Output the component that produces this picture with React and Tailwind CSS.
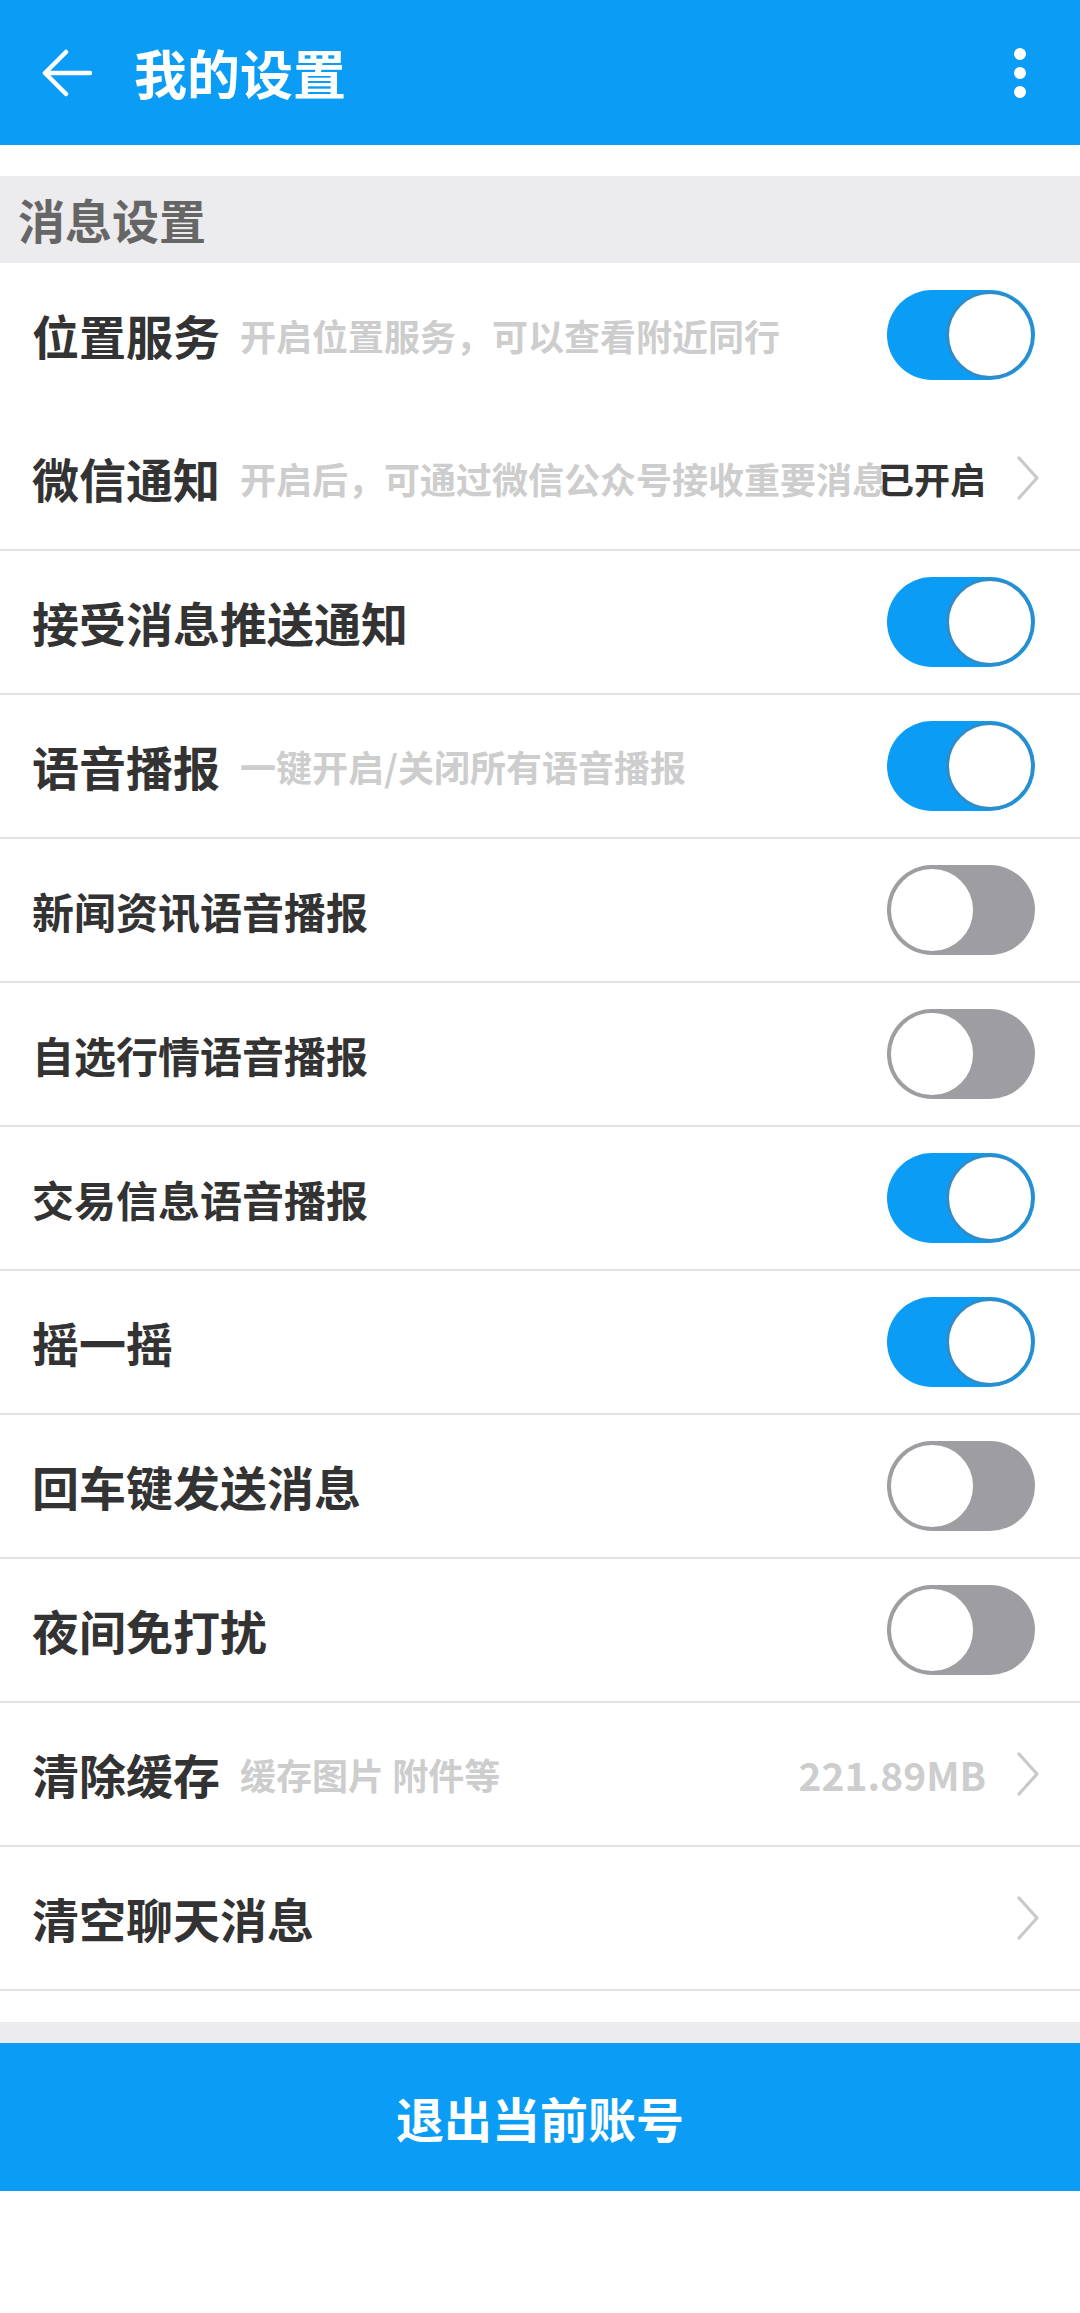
import React from "react";

const FONT = { fontFamily: '"Noto Sans CJK SC", "Noto Sans", sans-serif' };

function Toggle({ on }) {
  return on ? (
    <div className="flex h-[90px] w-[148px] items-center justify-end rounded-full bg-[#0b9df5] p-[1px]">
      <div className="h-[88px] w-[88px] rounded-full border-[3px] border-[#2f8cc9] bg-white" />
    </div>
  ) : (
    <div className="flex h-[90px] w-[148px] items-center justify-start rounded-full bg-[#9e9da1] p-[1px]">
      <div className="h-[88px] w-[88px] rounded-full border-[3px] border-[#9e9da1] bg-white" />
    </div>
  );
}

function Chevron() {
  return (
    <svg width="24" height="44" viewBox="0 0 24 44" className="shrink-0">
      <path d="M3 2 L21 22 L3 42" fill="none" stroke="#c9c9c9" strokeWidth="3.2" strokeLinecap="round" strokeLinejoin="round" />
    </svg>
  );
}

function Row({ label, small, desc, toggle, right, rightDark, chevron, border = true }) {
  return (
    <div
      className={`flex h-[144px] items-center pl-[32px] ${chevron ? "pr-[40px]" : "pr-[45px]"} ${border ? "border-b-2 border-[#e3e3e3]" : ""}`}
    >
      <span className={`shrink-0 whitespace-nowrap font-bold text-[#333333] ${small ? "text-[42px]" : "text-[47px]"}`}>
        {label}
      </span>
      <div className="min-w-0 flex-1 whitespace-nowrap">
        {desc && <span className="ml-[20px] text-[36px] font-bold text-[#cdcdcd]">{desc}</span>}
      </div>
      {right && (
        <span className={`shrink-0 whitespace-nowrap font-bold ${rightDark ? "text-[36px] text-[#333333]" : "text-[39px] text-[#cdcdcd]"}`}>
          {right}
        </span>
      )}
      {chevron && <div className="ml-[30px] flex items-center"><Chevron /></div>}
      {toggle !== undefined && <Toggle on={toggle} />}
    </div>
  );
}

export default function App() {
  return (
    <div className="min-h-[2313px] w-[1080px] bg-white" style={FONT}>
      {/* Header */}
      <div className="flex h-[145px] items-center bg-[#0b9df5] pl-[42px] pr-[54px]">
        <svg width="50" height="48" viewBox="0 0 50 48" className="shrink-0">
          <path d="M48 24 H4 M24 3 L3 24 L24 45" fill="none" stroke="white" strokeWidth="4.5" strokeLinecap="round" strokeLinejoin="round" />
        </svg>
        <span className="ml-[42px] text-[53px] font-bold text-white">我的设置</span>
        <div className="flex-1" />
        <div className="flex flex-col items-center gap-[7px]">
          <div className="h-[12px] w-[12px] rounded-full bg-white" />
          <div className="h-[12px] w-[12px] rounded-full bg-white" />
          <div className="h-[12px] w-[12px] rounded-full bg-white" />
        </div>
      </div>

      <div className="h-[31px]" />

      {/* Section header */}
      <div className="flex h-[87px] items-center bg-[#ecebed] pl-[18px]">
        <span className="text-[47px] font-bold text-[#666666]">消息设置</span>
      </div>

      <Row label="位置服务" desc="开启位置服务，可以查看附近同行" toggle={true} border={false} />
      <Row label="微信通知" desc="开启后，可通过微信公众号接收重要消息" right="已开启" rightDark chevron />
      <Row label="接受消息推送通知" toggle={true} />
      <Row label="语音播报" desc="一键开启/关闭所有语音播报" toggle={true} />
      <Row label="新闻资讯语音播报" small toggle={false} />
      <Row label="自选行情语音播报" small toggle={false} />
      <Row label="交易信息语音播报" small toggle={true} />
      <Row label="摇一摇" toggle={true} />
      <Row label="回车键发送消息" toggle={false} />
      <Row label="夜间免打扰" toggle={false} />
      <Row label="清除缓存" desc="缓存图片 附件等" right="221.89MB" chevron />
      <Row label="清空聊天消息" chevron />

      <div className="h-[31px]" />
      <div className="h-[21px] bg-[#ecebed]" />

      <div className="flex h-[148px] items-center justify-center bg-[#0b9df5]">
        <span className="text-[48px] font-bold text-white">退出当前账号</span>
      </div>
    </div>
  );
}
